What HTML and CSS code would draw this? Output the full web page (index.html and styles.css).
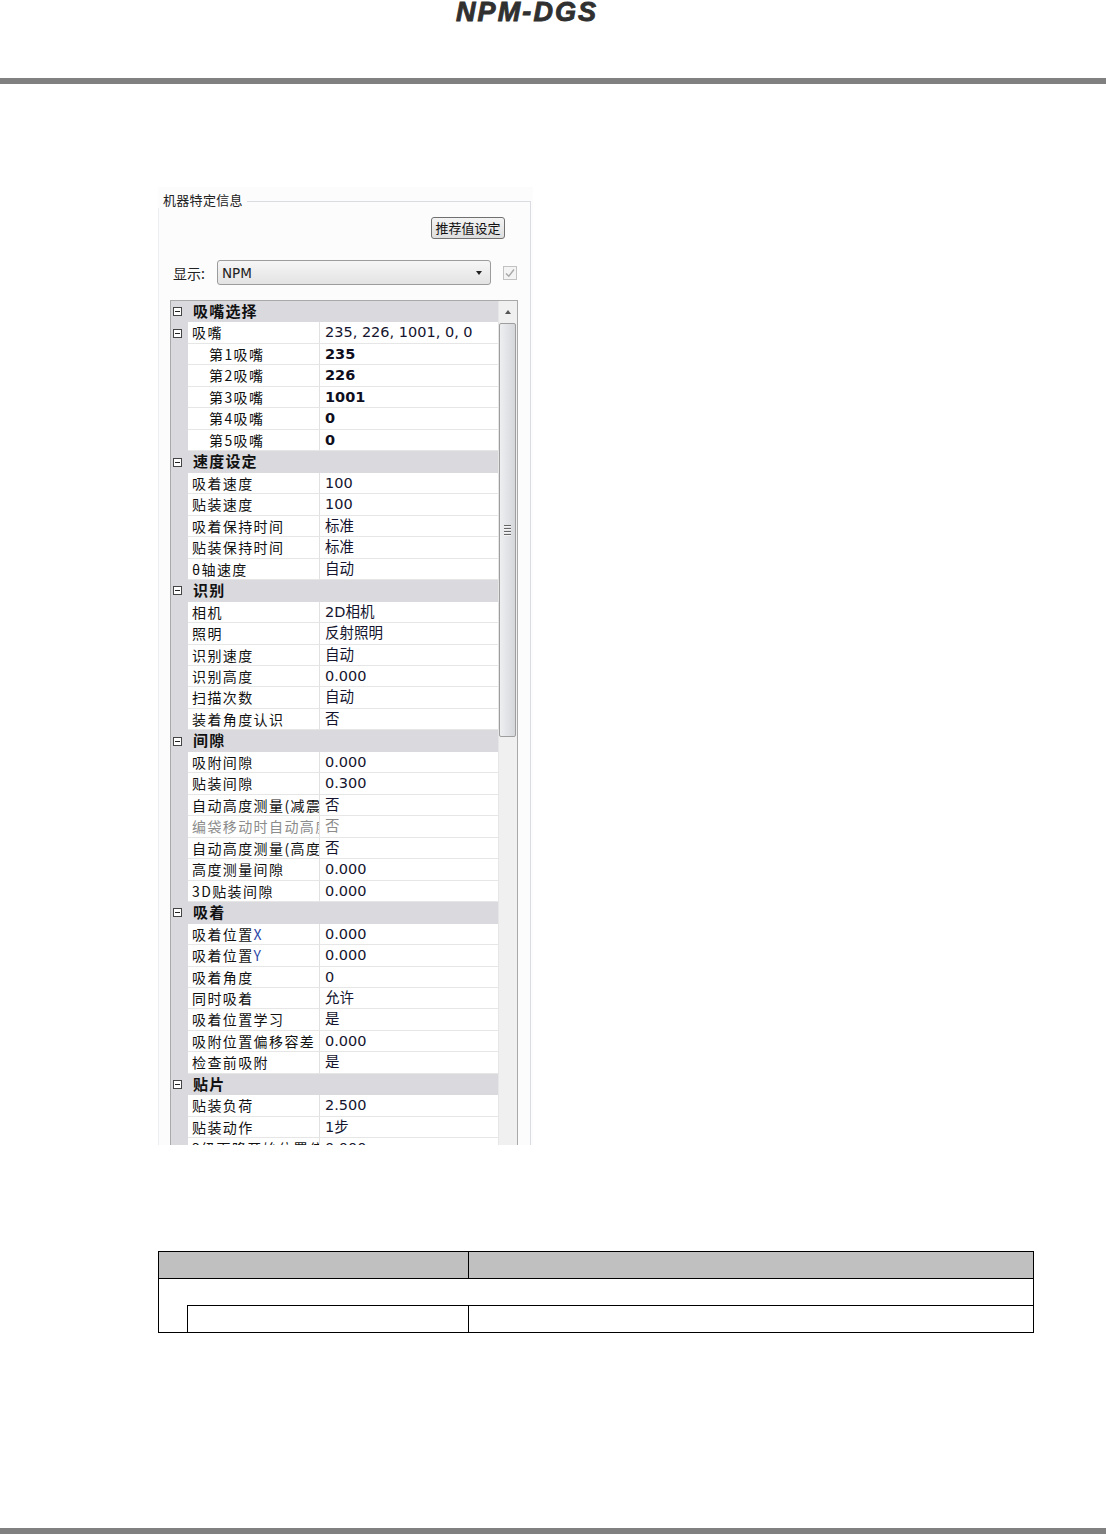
FILE: index.html
```html
<!DOCTYPE html>
<html lang="zh-CN">
<head>
<meta charset="utf-8">
<title>NPM-DGS 机器特定信息</title>
<link rel="stylesheet" href="styles.css">
</head>
<body>
<header class="doc-head"><div class="logo">NPM-DGS</div></header>
<div class="rule"></div>
<main class="content">
  <div class="shot">
    <div class="group-head"><span class="group-title">机器特定信息</span><span class="group-line"></span></div>
    <div class="group-body">
      <div class="btn-row"><button class="btn" type="button">推荐值设定</button></div>
      <div class="disp-row">
        <span class="disp-label">显示:</span>
        <div class="combo"><span class="combo-text">NPM</span><span class="combo-arrow"></span></div>
        <span class="chk"><svg width="12" height="12" viewBox="0 0 12 12"><path d="M2 6.5 L4.8 9.3 L10 2.5" fill="none" stroke="#a8a8a8" stroke-width="1.4"/></svg></span>
      </div>
      <div class="grid">
        <div class="rows">
          <div class="row cat"><span class="m"><i class="tog"></i></span><span class="c">吸嘴选择</span></div>
          <div class="row"><span class="m"><i class="tog"></i></span><span class="n">吸嘴</span><span class="v">235, 226, 1001, 0, 0</span></div>
          <div class="row"><span class="m"></span><span class="n sub">第1吸嘴</span><span class="v b">235</span></div>
          <div class="row"><span class="m"></span><span class="n sub">第2吸嘴</span><span class="v b">226</span></div>
          <div class="row"><span class="m"></span><span class="n sub">第3吸嘴</span><span class="v b">1001</span></div>
          <div class="row"><span class="m"></span><span class="n sub">第4吸嘴</span><span class="v b">0</span></div>
          <div class="row"><span class="m"></span><span class="n sub">第5吸嘴</span><span class="v b">0</span></div>
          <div class="row cat"><span class="m"><i class="tog"></i></span><span class="c">速度设定</span></div>
          <div class="row"><span class="m"></span><span class="n">吸着速度</span><span class="v">100</span></div>
          <div class="row"><span class="m"></span><span class="n">贴装速度</span><span class="v">100</span></div>
          <div class="row"><span class="m"></span><span class="n">吸着保持时间</span><span class="v">标准</span></div>
          <div class="row"><span class="m"></span><span class="n">贴装保持时间</span><span class="v">标准</span></div>
          <div class="row"><span class="m"></span><span class="n">θ轴速度</span><span class="v">自动</span></div>
          <div class="row cat"><span class="m"><i class="tog"></i></span><span class="c">识别</span></div>
          <div class="row"><span class="m"></span><span class="n">相机</span><span class="v">2D相机</span></div>
          <div class="row"><span class="m"></span><span class="n">照明</span><span class="v">反射照明</span></div>
          <div class="row"><span class="m"></span><span class="n">识别速度</span><span class="v">自动</span></div>
          <div class="row"><span class="m"></span><span class="n">识别高度</span><span class="v">0.000</span></div>
          <div class="row"><span class="m"></span><span class="n">扫描次数</span><span class="v">自动</span></div>
          <div class="row"><span class="m"></span><span class="n">装着角度认识</span><span class="v">否</span></div>
          <div class="row cat"><span class="m"><i class="tog"></i></span><span class="c">间隙</span></div>
          <div class="row"><span class="m"></span><span class="n">吸附间隙</span><span class="v">0.000</span></div>
          <div class="row"><span class="m"></span><span class="n">贴装间隙</span><span class="v">0.300</span></div>
          <div class="row"><span class="m"></span><span class="n">自动高度测量(减震)</span><span class="v">否</span></div>
          <div class="row dim"><span class="m"></span><span class="n">编袋移动时自动高度测量</span><span class="v">否</span></div>
          <div class="row"><span class="m"></span><span class="n">自动高度测量(高度)</span><span class="v">否</span></div>
          <div class="row"><span class="m"></span><span class="n">高度测量间隙</span><span class="v">0.000</span></div>
          <div class="row"><span class="m"></span><span class="n">3D贴装间隙</span><span class="v">0.000</span></div>
          <div class="row cat"><span class="m"><i class="tog"></i></span><span class="c">吸着</span></div>
          <div class="row"><span class="m"></span><span class="n">吸着位置<em class="ax">X</em></span><span class="v">0.000</span></div>
          <div class="row"><span class="m"></span><span class="n">吸着位置<em class="ax">Y</em></span><span class="v">0.000</span></div>
          <div class="row"><span class="m"></span><span class="n">吸着角度</span><span class="v">0</span></div>
          <div class="row"><span class="m"></span><span class="n">同时吸着</span><span class="v">允许</span></div>
          <div class="row"><span class="m"></span><span class="n">吸着位置学习</span><span class="v">是</span></div>
          <div class="row"><span class="m"></span><span class="n">吸附位置偏移容差</span><span class="v">0.000</span></div>
          <div class="row"><span class="m"></span><span class="n">检查前吸附</span><span class="v">是</span></div>
          <div class="row cat"><span class="m"><i class="tog"></i></span><span class="c">贴片</span></div>
          <div class="row"><span class="m"></span><span class="n">贴装负荷</span><span class="v">2.500</span></div>
          <div class="row"><span class="m"></span><span class="n">贴装动作</span><span class="v">1步</span></div>
          <div class="row"><span class="m"></span><span class="n">3级下降开始位置偏移</span><span class="v">0.000</span></div>
        </div>
        <div class="sbar">
          <div class="sb-up"><span class="tri-up"></span></div>
          <div class="sb-thumb"><span class="grip"><i></i><i></i><i></i><i></i></span></div>
        </div>
      </div>
    </div>
  </div>

  <table class="spec">
    <colgroup><col class="c1"><col class="c2"><col class="c3"></colgroup>
    <tr class="hd"><th colspan="2"></th><th></th></tr>
    <tr><td colspan="3"></td></tr>
    <tr><td class="indent"></td><td></td><td></td></tr>
  </table>
</main>
<div class="rule"></div>
</body>
</html>
```
FILE: styles.css
```css
html, body {
  margin: 0;
  padding: 0;
  background: #fff;
}
body {
  width: 1106px;
  height: 1534px;
  overflow: hidden;
  font-family: "Noto Sans CJK SC", sans-serif;
  color: #111;
}

/* ---------- document header ---------- */
.doc-head {
  height: 78px;
}
.logo {
  margin-left: 456px;
  font-family: "Liberation Sans", Arial, sans-serif;
  font-weight: bold;
  font-style: italic;
  font-size: 27px;
  line-height: 24px;
  letter-spacing: 2.1px;
  color: #303030;
  -webkit-text-stroke: 0.9px #303030;
}
.rule {
  height: 6px;
  background: #808080;
}
.content {
  height: 1444px;
  box-sizing: border-box;
  padding-top: 103px;
}

/* ---------- screenshot panel ---------- */
.shot {
  margin-left: 158px;
  width: 375px;
  height: 958px;
  overflow: hidden;
  background: #fcfcfc;
  box-sizing: border-box;
  padding-top: 5px;
}
.group-head {
  display: flex;
  width: 373px;
  height: 16px;
  padding-left: 5px;
  box-sizing: border-box;
}
.group-title {
  font-size: 13px;
  line-height: 16px;
  color: #222;
  padding-right: 4px;
  letter-spacing: 0.3px;
}
.group-line {
  flex: 1;
  margin-top: 9px;
  border-top: 1px solid #d9dde1;
  border-right: 1px solid #d9dde1;
}
.group-body {
  width: 373px;
  box-sizing: border-box;
  border-left: 1px solid #eceeef;
  border-right: 1px solid #d9dde1;
  padding-left: 11px;
  padding-right: 0;
  height: 960px;
}
.btn-row {
  display: flex;
  justify-content: flex-end;
  padding-right: 25px;
  padding-top: 9px;
}
.btn {
  width: 74px;
  height: 22px;
  margin: 0;
  padding: 0;
  border: 1px solid #707070;
  border-radius: 3px;
  background: linear-gradient(#f4f4f4, #dedede);
  font-family: "Noto Sans CJK SC", sans-serif;
  font-size: 13px;
  line-height: 20px;
  color: #111;
}
.disp-row {
  display: flex;
  align-items: center;
  height: 25px;
  margin-top: 21px;
}
.disp-label {
  width: 44px;
  margin-left: 3px;
  font-size: 14px;
  color: #222;
}
.combo {
  width: 274px;
  height: 25px;
  box-sizing: border-box;
  border: 1px solid #9c9c9c;
  border-radius: 3px;
  background: linear-gradient(#f6f6f6, #e3e3e3);
  display: flex;
  align-items: center;
  padding-left: 4px;
  padding-right: 8px;
}
.combo-text {
  flex: 1;
  font-family: "DejaVu Sans", sans-serif;
  font-size: 13.5px;
  color: #222;
}
.combo-arrow {
  width: 0;
  height: 0;
  border-left: 3.5px solid transparent;
  border-right: 3.5px solid transparent;
  border-top: 4px solid #222;
}
.chk {
  width: 14px;
  height: 14px;
  margin-left: 12px;
  box-sizing: border-box;
  border: 1px solid #c2c2c2;
  background: #f4f4f4;
  display: flex;
  align-items: center;
  justify-content: center;
}

/* ---------- property grid ---------- */
.grid {
  display: flex;
  width: 348px;
  margin-top: 15px;
  box-sizing: border-box;
  border: 1px solid #a9a9a9;
  background: #fff;
}
.rows {
  width: 327px;
}
.row {
  display: flex;
  height: 21.47px;
  font-size: 14px;
  line-height: 20.47px;
}
.m {
  width: 17px;
  flex: none;
  box-sizing: border-box;
  padding-left: 2px;
  background: #d9d9de;
  display: flex;
  align-items: center;
}
.tog {
  display: block;
  width: 9px;
  height: 9px;
  box-sizing: border-box;
  border: 1px solid #444;
  background: #fff;
  position: relative;
}
.tog::after {
  content: "";
  position: absolute;
  left: 1px;
  right: 1px;
  top: 3px;
  height: 1px;
  background: #222;
}
.n {
  width: 132px;
  flex: none;
  box-sizing: border-box;
  padding-left: 4px;
  border-bottom: 1px solid #e6e6e6;
  border-right: 1px solid #e1e1e1;
  background: #fff;
  white-space: nowrap;
  overflow: hidden;
  letter-spacing: 1.4px;
  color: #111;
}
.n.sub {
  padding-left: 21px;
}
.ax {
  font-style: normal;
  color: #2c47a8;
}
.v {
  flex: 1;
  box-sizing: border-box;
  padding-left: 5px;
  border-bottom: 1px solid #e6e6e6;
  background: #fff;
  white-space: nowrap;
  overflow: hidden;
  font-family: "DejaVu Sans", "Noto Sans CJK SC", sans-serif;
  font-size: 14.5px;
  color: #14142e;
}
.v.b {
  font-weight: bold;
  color: #0e0e1e;
}
.dim .n, .dim .v {
  color: #8c8c8c;
}
.cat {
  background: #d9d9de;
}
.cat .c {
  padding-left: 5px;
  font-size: 15px;
  font-weight: bold;
  letter-spacing: 1.2px;
  color: #111;
}

/* ---------- scrollbar ---------- */
.sbar {
  width: 19px;
  flex: none;
  background: #f0f0f0;
  border-left: 1px solid #e6e6e6;
  box-sizing: border-box;
}
.sb-up {
  height: 21px;
  display: flex;
  align-items: center;
  justify-content: center;
}
.tri-up {
  width: 0;
  height: 0;
  border-left: 3.5px solid transparent;
  border-right: 3.5px solid transparent;
  border-bottom: 4px solid #555;
}
.sb-thumb {
  margin: 1px 0 0 0;
  width: 17px;
  height: 414px;
  box-sizing: border-box;
  border: 1px solid #9e9e9e;
  border-radius: 2px;
  background: linear-gradient(to right, #eeeff1, #d6d7db);
  display: flex;
  align-items: center;
  justify-content: center;
}
.grip {
  display: flex;
  flex-direction: column;
  gap: 1px;
}
.grip i {
  display: block;
  width: 7px;
  height: 1px;
  background: #666;
  border-bottom: 1px solid #f4f4f4;
}

/* ---------- bottom table ---------- */
.spec {
  border-collapse: collapse;
  table-layout: fixed;
  margin-left: 158px;
  margin-top: 106px;
  width: 875px;
}
.spec col.c1 { width: 29px; }
.spec col.c2 { width: 281px; }
.spec col.c3 { width: 565px; }
.spec th, .spec td {
  border: 1px solid #000;
  height: 26px;
  padding: 0;
}
.spec .hd th {
  background: #c0c0c0;
}
.spec td.indent {
  border-top-style: hidden;
}
```
